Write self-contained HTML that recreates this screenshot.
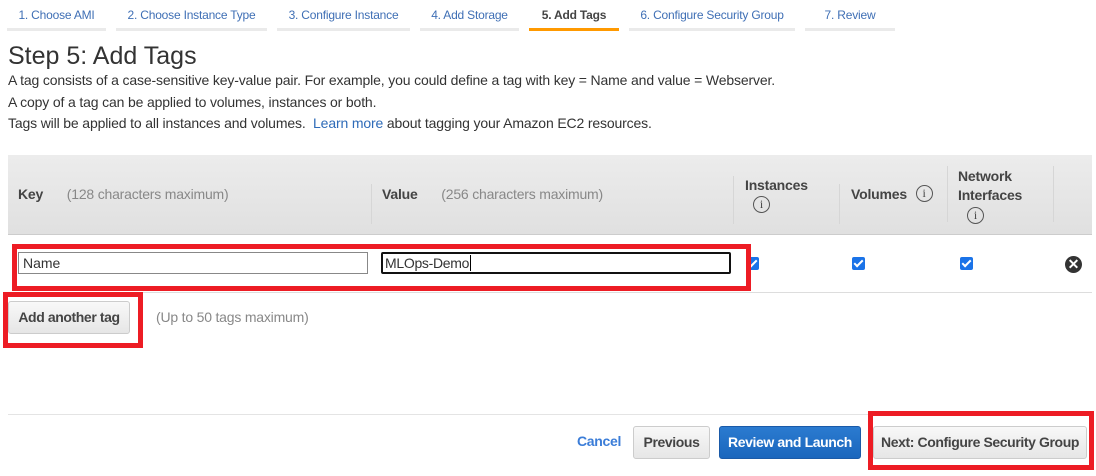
<!DOCTYPE html>
<html><head><meta charset="utf-8"><style>
*{box-sizing:border-box;margin:0;padding:0}
body{width:1096px;height:476px;background:#fff;font-family:"Liberation Sans",sans-serif;position:relative;overflow:hidden;color:#333}
.a{position:absolute}
.tab{position:absolute;top:0;height:31px;border-bottom:3px solid #eaeaea;font-size:12px;color:#3f6fb5;text-align:center;line-height:30px;letter-spacing:-0.2px}
.tab.on{border-bottom-color:#f90;color:#444;font-weight:bold}
p.l{position:absolute;left:8px;font-size:14px;color:#333;letter-spacing:-0.15px}
.hd{font-size:14px;font-weight:bold;color:#444;letter-spacing:-0.2px}
.gray{color:#888;font-weight:normal}
.div{position:absolute;top:184px;width:1px;height:40px;background:#fff;border-left:1px solid #d6d6d6}
.cb{position:absolute;width:13px;height:13px;background:#1a73e8;border-radius:2px}
.cb:after{content:"";position:absolute;left:4px;top:1px;width:3px;height:7px;border:solid #fff;border-width:0 2px 2px 0;transform:rotate(45deg)}
.info{display:inline-block;width:17px;height:17px;border:1px solid #555;border-radius:50%;font-size:12px;line-height:15px;text-align:center;font-weight:normal;color:#444;font-family:"Liberation Serif",serif;vertical-align:middle}
.btn{position:absolute;border:1px solid #ccc;border-radius:3px;background:linear-gradient(#f8f8f8,#e6e6e6);font-size:14px;font-weight:bold;color:#444;text-align:center;letter-spacing:-0.4px}
.red{position:absolute;border:5px solid #ed1c24}
</style></head><body>
<div class="tab" style="left:7px;width:99px">1. Choose AMI</div>
<div class="tab" style="left:116px;width:151px">2. Choose Instance Type</div>
<div class="tab" style="left:277px;width:133px">3. Configure Instance</div>
<div class="tab" style="left:420px;width:99px">4. Add Storage</div>
<div class="tab on" style="left:529px;width:90px">5. Add Tags</div>
<div class="tab" style="left:629px;width:166px">6. Configure Security Group</div>
<div class="tab" style="left:805px;width:90px">7. Review</div>

<div class="a" style="left:8px;top:42px;font-size:25px;color:#333">Step 5: Add Tags</div>
<p class="l" style="top:72px">A tag consists of a case-sensitive key-value pair. For example, you could define a tag with key = Name and value = Webserver.</p>
<p class="l" style="top:94px">A copy of a tag can be applied to volumes, instances or both.</p>
<p class="l" style="top:115px">Tags will be applied to all instances and volumes. &nbsp;<span style="color:#2e6bb8">Learn more</span>&nbsp;about tagging your Amazon EC2 resources.</p>

<div class="a" style="left:8px;top:155px;width:1084px;height:80px;background:linear-gradient(#ececec,#e0e0e0);border-bottom:1px solid #ccc"></div>
<div class="a hd" style="left:18px;top:186px">Key <span class="gray" style="margin-left:20px">(128 characters maximum)</span></div>
<div class="div" style="left:371px"></div>
<div class="a hd" style="left:382px;top:186px">Value <span class="gray" style="margin-left:20px">(256 characters maximum)</span></div>
<div class="div" style="left:733px;top:176px;height:48px"></div>
<div class="a hd" style="left:745px;top:177px">Instances<br><span class="info" style="margin:3px 0 0 8px">i</span></div>
<div class="div" style="left:839px"></div>
<div class="a hd" style="left:851px;top:186px">Volumes <span class="info" style="margin-left:5px;margin-top:-3px">i</span></div>
<div class="div" style="left:947px;top:166px;height:56px"></div>
<div class="a hd" style="left:958px;top:167px;line-height:19px">Network<br>Interfaces<br><span class="info" style="margin-left:9px">i</span></div>
<div class="div" style="left:1053px;top:166px;height:56px"></div>

<div class="a" style="left:8px;top:292px;width:1084px;height:1px;background:#ddd"></div>
<div class="a" style="left:18px;top:252px;width:350px;height:22px;border:1px solid #888;font-size:14px;padding:2px 4px;line-height:16px">Name</div>
<div class="a" style="left:381px;top:252px;width:350px;height:22px;border:2px solid #111;border-radius:2px;font-size:14px;padding:1px 2px;line-height:16px;letter-spacing:-0.3px">MLOps-Demo<span style="border-left:1px solid #000;margin-left:1px"></span></div>
<div class="cb" style="left:746px;top:257px"></div>
<div class="cb" style="left:852px;top:257px"></div>
<div class="cb" style="left:960px;top:257px"></div>
<div class="a" style="left:1065px;top:256px;width:17px;height:17px;border-radius:50%;background:#333;color:#fff;font-size:14px;font-weight:bold;text-align:center;line-height:17px">✕</div>
<div class="red" style="left:12px;top:244px;width:739px;height:47px"></div>

<div class="btn" style="left:8px;top:301px;width:122px;height:33px;line-height:31px">Add another tag</div>
<div class="red" style="left:3px;top:292px;width:140px;height:56px"></div>
<div class="a" style="left:156px;top:309px;font-size:14px;color:#888;letter-spacing:-0.2px">(Up to 50 tags maximum)</div>

<div class="a" style="left:8px;top:414px;width:1084px;height:1px;background:#e4e4e4"></div>
<div class="a" style="left:577px;top:433px;font-size:14px;font-weight:bold;color:#3b7dd8;letter-spacing:-0.3px">Cancel</div>
<div class="btn" style="left:633px;top:426px;width:77px;height:33px;line-height:31px">Previous</div>
<div class="btn" style="left:719px;top:426px;width:142px;height:33px;line-height:31px;background:linear-gradient(#2b7bd0,#1a66bd);border-color:#1a5aa8;color:#fff">Review and Launch</div>
<div class="btn" style="left:873px;top:426px;width:214px;height:33px;line-height:31px">Next: Configure Security Group</div>
<div class="red" style="left:868px;top:411px;width:226px;height:59px"></div>
</body></html>
